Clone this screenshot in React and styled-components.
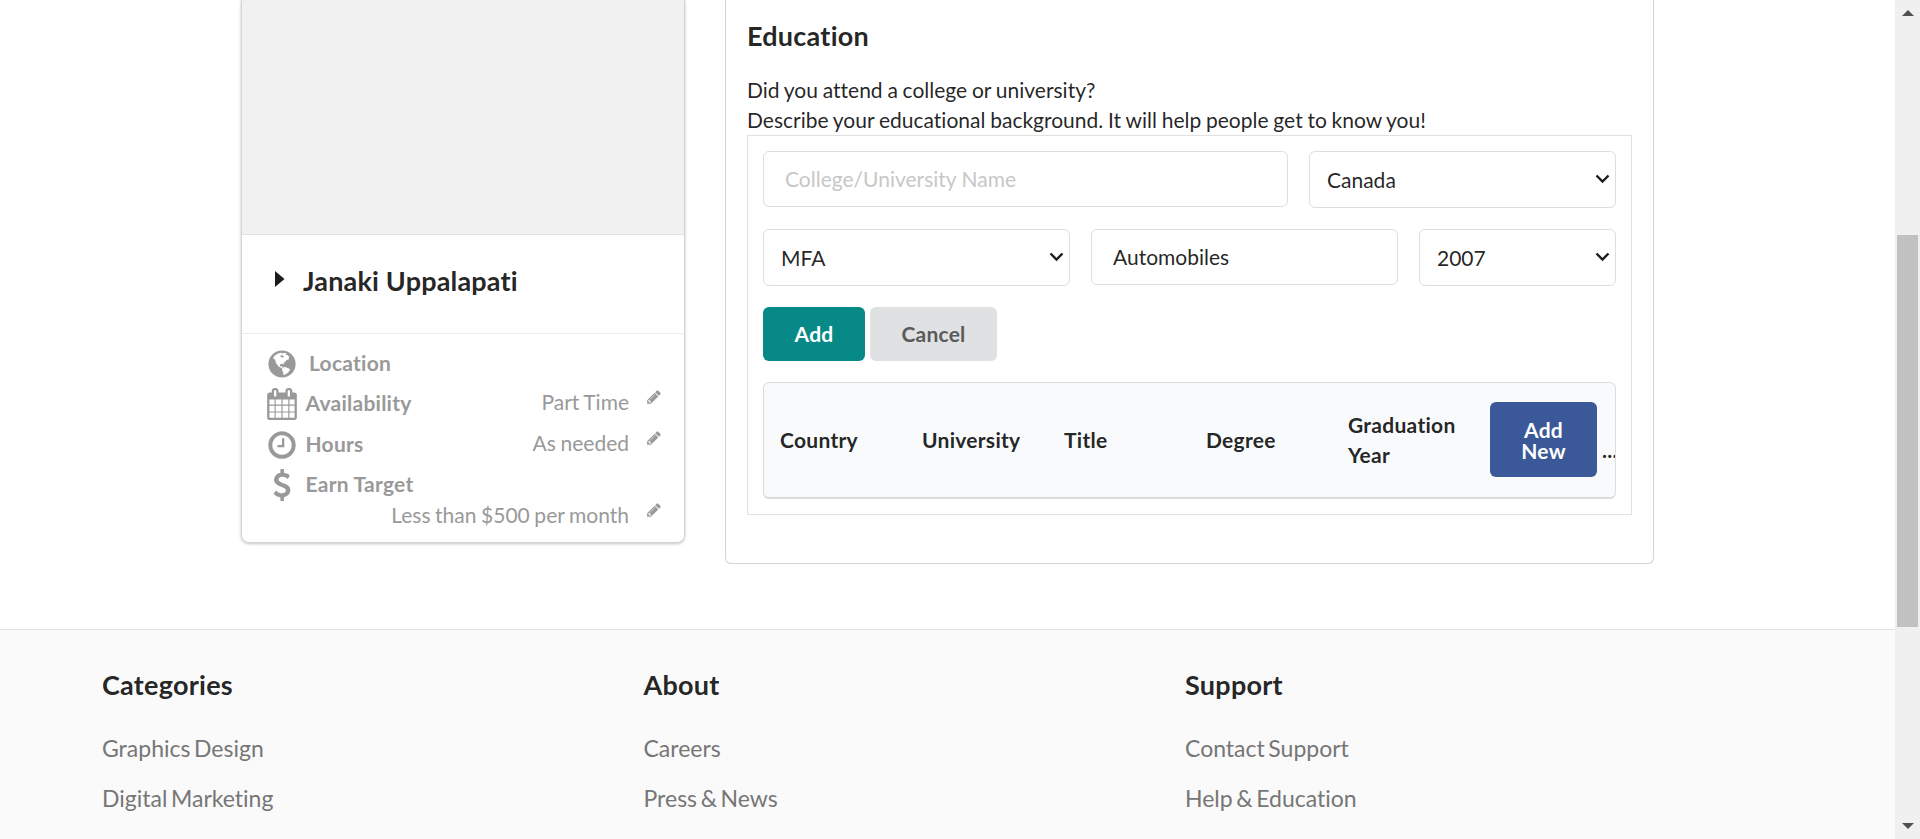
import React from "react";
import styled, { createGlobalStyle } from "styled-components";

const Global = createGlobalStyle`
  *, *::before, *::after { box-sizing: border-box; }
  html, body { margin: 0; height: 839px; overflow: hidden; }
  body {
    background: #fff;
    color: rgba(0, 0, 0, 0.87);
    font-family: Lato, "Liberation Sans", Arial, sans-serif;
    font-size: 21px;
    line-height: 30px;
    font-variant-ligatures: none;
  }
  input, select, button { font-family: inherit; font-variant-ligatures: none; margin: 0; }
`;

const Window = styled.div`
  display: flex;
  width: 1920px;
  height: 839px;
  overflow: hidden;
`;

const Page = styled.div`
  display: flex;
  flex-direction: column;
  width: 1895px;
`;

const Main = styled.main`
  display: flex;
  align-items: flex-start;
  height: 629px;
  padding-left: 241px;
`;

const ProfileCard = styled.aside`
  display: flex;
  flex-direction: column;
  width: 444px;
  height: 543px;
  border: 1px solid #d4d4d5;
  border-top: 0;
  border-radius: 0 0 8px 8px;
  box-shadow: 0 1px 3px #c4c4c6;
  overflow: hidden;
`;

const Photo = styled.div`
  height: 234px;
  background: #f1f1f1;
`;

const NameRow = styled.div`
  display: flex;
  align-items: center;
  height: 99px;
  padding: 0 0 7px 33px;
  border-top: 1px solid #e1e1e2;
  svg { margin-top: -3px; }
`;

const Name = styled.h2`
  margin: 0 0 0 18px;
  font-size: 27px;
  line-height: 34px;
  font-weight: 700;
  letter-spacing: 0.18px;
`;

const Details = styled.div`
  flex: 1;
  padding: 10px 22px 0 23px;
  border-top: 1px solid #ededee;
  color: #999;
`;

const Detail = styled.div`
  display: flex;
  align-items: flex-start;
  height: ${(p) => p.$height}px;
`;

const IconSlot = styled.span`
  display: flex;
  justify-content: center;
  align-items: center;
  width: 34px;
  height: 40px;
  margin-right: ${(p) => p.$gap || 6.5}px;
`;

const Label = styled.span`
  padding-top: 4px;
  font-weight: 700;
  letter-spacing: 0.25px;
`;

const Value = styled.span`
  display: flex;
  align-items: flex-start;
  gap: 17px;
  margin-left: auto;
  padding-top: ${(p) => p.$top || 0}px;
  word-spacing: -0.8px;
  svg { margin-top: 2px; }
`;

const Panel = styled.section`
  width: 929px;
  height: 564px;
  margin-left: 40px;
  padding: 19px 21px 0;
  border: 1px solid #d4d4d5;
  border-top: 0;
  border-radius: 0 0 6px 6px;
`;

const Heading = styled.h3`
  margin: 0;
  font-size: 27px;
  line-height: 34px;
  font-weight: 700;
  letter-spacing: 0.25px;
`;

const Intro = styled.p`
  margin: 22px 0 0;
  word-spacing: -0.6px;
`;

const Form = styled.div`
  height: 380px;
  padding: 15px;
  border: 1px solid #e0e0e1;
`;

const Fields = styled.div`
  display: flex;
  align-items: flex-start;
  gap: 21px;
  height: 78px;
`;

const TextInput = styled.input`
  width: ${(p) => p.$width}px;
  height: 56px;
  padding: 0 21px 2px;
  border: 1px solid #dededf;
  border-radius: 6px;
  background: #fff;
  color: rgba(0, 0, 0, 0.87);
  font-size: 21px;
  line-height: 26px;
  outline: 0;
  &::placeholder { color: #c7c7c7; opacity: 1; }
`;

const SelectBox = styled.div`
  display: flex;
  align-items: center;
  justify-content: space-between;
  width: ${(p) => p.$width}px;
  height: 57px;
  padding: 0 5px 0 17px;
  border: 1px solid #dededf;
  border-radius: 6px;
  svg { margin-top: -1px; }
`;

const Actions = styled.div`
  display: flex;
  gap: 5px;
  height: 75px;
`;

const Button = styled.button`
  width: ${(p) => p.$width}px;
  height: ${(p) => p.$height || 54}px;
  padding: 0 0 ${(p) => (p.$height ? 0 : 1)}px;
  border: 0;
  border-radius: 6px;
  background: ${(p) => p.$bg};
  color: ${(p) => p.$fg || "#fff"};
  font-size: 21px;
  line-height: 21px;
  font-weight: 700;
  letter-spacing: 0.2px;
`;

const Table = styled.div`
  display: flex;
  align-items: center;
  height: 117px;
  padding: 0 0 1px 16px;
  border: 1px solid #dbdcdd;
  border-bottom: 2px solid #d9dbdc;
  border-radius: 6px;
  background: #f9fafb;
  font-weight: 700;
  letter-spacing: 0.28px;
  overflow: hidden;
`;

const Cell = styled.div`
  flex: none;
  width: 142px;
  padding-right: 17px;
`;

const ActionCell = styled.div`
  display: flex;
  flex: none;
  align-items: flex-end;
  gap: 5px;
  height: 75px;
`;

const Ellipsis = styled.span`
  line-height: 30px;
  padding-bottom: 12px;
`;

const Footer = styled.footer`
  display: grid;
  grid-template-columns: repeat(3, 541.5px);
  height: 210px;
  padding: 38px 0 0 102px;
  border-top: 1px solid #e0e1e2;
  background: #fafafa;
`;

const FooterTitle = styled(Heading)`
  margin-bottom: 21px;
`;

const FooterLink = styled.a`
  display: block;
  height: 50px;
  color: #767676;
  font-size: 23px;
  line-height: 50px;
  word-spacing: -2.3px;
`;

const ScrollBar = styled.div`
  display: flex;
  flex-direction: column;
  align-items: center;
  width: 25px;
  height: 839px;
  padding: 10px 0;
  background: #f0f0f0;
`;

const Thumb = styled.div`
  width: 21px;
  height: 392px;
  margin: 219px 0 auto;
  background: #c1c1c1;
`;

const FONT_ICONS = {
  calendar: "M192 1664h288v-288h-288v288zm352 0h320v-288h-320v288zm-352-352h288v-320h-288v320zm352 0h320v-320h-320v320zm-352-384h288v-288h-288v288zm736 736h320v-288h-320v288zm-384-736h320v-288h-320v288zm768 736h288v-288h-288v288zm-384-352h320v-320h-320v320zm-352-864v-288q0-13-9.5-22.5t-22.5-9.5h-64q-13 0-22.5 9.5t-9.5 22.5v288q0 13 9.5 22.5t22.5 9.5h64q13 0 22.5-9.5t9.5-22.5zm736 864h288v-320h-288v320zm-384-384h320v-288h-320v288zm384 0h288v-288h-288v288zm32-480v-288q0-13-9.5-22.5t-22.5-9.5h-64q-13 0-22.5 9.5t-9.5 22.5v288q0 13 9.5 22.5t22.5 9.5h64q13 0 22.5-9.5t9.5-22.5zm384-64v1280q0 52-38 90t-90 38h-1408q-52 0-90-38t-38-90v-1280q0-52 38-90t90-38h128v-96q0-66 47-113t113-47h64q66 0 113 47t47 113v96h384v-96q0-66 47-113t113-47h64q66 0 113 47t47 113v96h128q52 0 90 38t38 90z",
  clock: "M1024 544v448q0 14-9 23t-23 9h-320q-14 0-23-9t-9-23v-64q0-14 9-23t23-9h224v-352q0-14 9-23t23-9h64q14 0 23 9t9 23zm416 352q0-148-73-273t-198-198-273-73-273 73-198 198-73 273 73 273 198 198 273 73 273-73 198-198 73-273zm224 0q0 209-103 385.5t-279.5 279.5-385.5 103-385.5-103-279.5-279.5-103-385.5 103-385.5 279.5-279.5 385.5-103 385.5 103 279.5 279.5 103 385.5z",
  dollar: "M1362 1185q0 153-99.5 263.5t-258.5 136.5v175q0 14-9 23t-23 9h-135q-13 0-22.5-9.5t-9.5-22.5v-175q-66-9-127.5-31t-101.5-44.5-74-48-46.5-37.5-17.5-18q-17-21-2-41l103-135q7-10 23-12 15-2 24 9l2 2q113 99 243 125 37 8 74 8 81 0 142.5-43t61.5-122q0-28-15-53t-33.5-42-58.5-37.5-66-32-80-32.5q-39-16-61.5-25t-61.5-26.5-62.5-31-56.5-35.5-53.5-42.5-43.5-49-35.5-58-21-66.5-8.5-78q0-138 98-242t255-134v-180q0-13 9.5-22.5t22.5-9.5h135q14 0 23 9t9 23v176q57 6 110.5 23t87 33.5 63.5 37.5 39 29 15 14q17 18 5 38l-81 146q-8 15-23 16-14 3-27-7-3-3-14.5-12t-39-26.5-58.5-32-74.5-26-85.5-11.5q-95 0-155 43t-60 111q0 26 8.5 48t29.5 41.5 39.5 33 56 31 60.5 27 70 27.5q53 20 81 31.5t76 35 75.5 42.5 62 50 53 63.5 31.5 76.5 13 94z",
  pencil: "M491 1536l91-91-235-235-91 91v107h128v128h107zm523-928q0-22-22-22-10 0-17 7l-542 542q-7 7-7 17 0 22 22 22 10 0 17-7l542-542q7-7 7-17zm-54-192l416 416-832 832h-416v-416zm683 96q0 53-37 90l-166 166-416-416 166-165q36-38 90-38 53 0 91 38l235 234q37 39 37 91z",
};

const Icon = ({ name, size = 32 }) => (
  <svg width={size} height={size} viewBox="0 0 1792 1792" fill="currentColor">
    <path d={FONT_ICONS[name]} />
  </svg>
);

const Globe = () => (
  <svg width="28" height="28" viewBox="0 0 28 28">
    <circle cx="14" cy="14" r="13.6" fill="#999" />
    <path
      fill="#fff"
      d="M5 8 7 5.6l3-2 3.2-.9 1.2.9 2-.8 2.2.7-.8 1.2 2.1.5 1.5 2.1-1 .9.8 1-2.4.7-1.6 1.8-1.4 1.3-.1 1.4-1.4-.6-2.1.4-.4 1.8 1.2.6 1.1-.7.2 1.5 1.3.5.4 1.5-1-.2-2-1.5-2.2-.9-1.3-1.9-1.6-1.9-.6-3z"
    />
    <path fill="#fff" d="m14.6 18.3 1.5-1.2 1.8.2 2.3 1 1.8.9-.7 1.9-1.5 1.7-2 1.4-2.3.7-.5-2.9-1-1.8z" />
    <path fill="#999" d="m13 5 1.6.5 1.3 1.2-.9 1.1-1.3-.5-1.4-1z" />
  </svg>
);

const Chevron = () => (
  <svg width="15" height="10" viewBox="0 0 15 10" fill="none" stroke="#1c1c1c" strokeWidth="2.4">
    <path d="M1.5 1.5 7.5 7.5l6-6" />
  </svg>
);

const Select = ({ value, $width }) => (
  <SelectBox $width={$width}>
    {value}
    <Chevron />
  </SelectBox>
);

const FOOTER = [
  ["Categories", "Graphics Design", "Digital Marketing"],
  ["About", "Careers", "Press & News"],
  ["Support", "Contact Support", "Help & Education"],
];

export default function App() {
  return (
    <Window>
      <Global />
      <Page>
        <Main>
          <ProfileCard>
            <Photo />
            <NameRow>
              <svg width="10" height="16" viewBox="0 0 10 16">
                <path d="M0 0 9.5 8 0 16z" fill="#1c1c1c" />
              </svg>
              <Name>Janaki Uppalapati</Name>
            </NameRow>
            <Details>
              <Detail $height={40}>
                <IconSlot $gap={10}><Globe /></IconSlot>
                <Label>Location</Label>
              </Detail>
              <Detail $height={41}>
                <IconSlot><Icon name="calendar" /></IconSlot>
                <Label>Availability</Label>
                <Value $top={3}>Part Time<Icon name="pencil" size={16} /></Value>
              </Detail>
              <Detail $height={40}>
                <IconSlot><Icon name="clock" /></IconSlot>
                <Label>Hours</Label>
                <Value $top={3}>As needed<Icon name="pencil" size={16} /></Value>
              </Detail>
              <Detail $height={35}>
                <IconSlot><Icon name="dollar" /></IconSlot>
                <Label>Earn Target</Label>
              </Detail>
              <Detail $height={34}>
                <Value>Less than $500 per month<Icon name="pencil" size={16} /></Value>
              </Detail>
            </Details>
          </ProfileCard>
          <Panel>
            <Heading>Education</Heading>
            <Intro>
              Did you attend a college or university?
              <br />
              Describe your educational background. It will help people get to know you!
            </Intro>
            <Form>
              <Fields>
                <TextInput $width={525} placeholder="College/University Name" />
                <Select $width={307} value="Canada" />
              </Fields>
              <Fields>
                <Select $width={307} value="MFA" />
                <TextInput $width={307} defaultValue="Automobiles" />
                <Select $width={197} value="2007" />
              </Fields>
              <Actions>
                <Button $width={102} $bg="#078a87">Add</Button>
                <Button $width={127} $bg="#e0e1e2" $fg="#5a5a5b">Cancel</Button>
              </Actions>
              <Table>
                <Cell>Country</Cell>
                <Cell>University</Cell>
                <Cell>Title</Cell>
                <Cell>Degree</Cell>
                <Cell>Graduation Year</Cell>
                <ActionCell>
                  <Button $width={107} $height={75} $bg="#3b5998">Add<br />New</Button>
                  <Ellipsis>...</Ellipsis>
                </ActionCell>
              </Table>
            </Form>
          </Panel>
        </Main>
        <Footer>
          {FOOTER.map(([title, ...links]) => (
            <div key={title}>
              <FooterTitle>{title}</FooterTitle>
              {links.map((l) => <FooterLink key={l}>{l}</FooterLink>)}
            </div>
          ))}
        </Footer>
      </Page>
      <ScrollBar>
        <svg width="12" height="6" viewBox="0 0 12 6"><path d="M0 6 6 0l6 6z" fill="#505050" /></svg>
        <Thumb />
        <svg width="12" height="6" viewBox="0 0 12 6"><path d="M0 0h12L6 6z" fill="#505050" /></svg>
      </ScrollBar>
    </Window>
  );
}
